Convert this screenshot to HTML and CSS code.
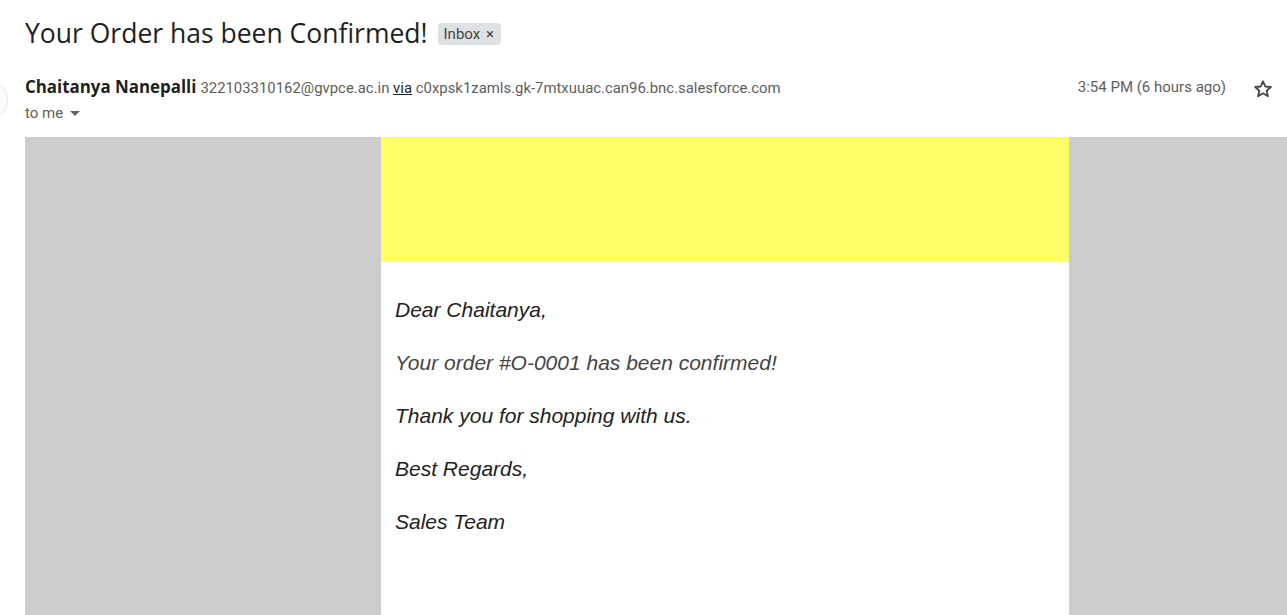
FILE: index.html
```html
<!DOCTYPE html>
<html>
<head>
<meta charset="utf-8">
<link rel="stylesheet" href="styles.css">
</head>
<body>
<div class="page">
  <div class="subject-row">
    <h1 class="subject">Your Order has been Confirmed!</h1>
    <span class="label">Inbox <span class="label-x">×</span></span>
  </div>
  <div class="header">
    <div class="avatar"></div>
    <div class="sender">
      <div class="from-line">
        <span class="from-name">Chaitanya Nanepalli</span>
        <span class="from-addr">322103310162@gvpce.ac.in <u>via</u> c0xpsk1zamls.gk-7mtxuuac.can96.bnc.salesforce.com</span>
      </div>
      <div class="to-line">to me <svg class="caret" width="10" height="5" viewBox="0 0 10 5"><path d="M0 0h10L5 5z" fill="#5f6368"/></svg></div>
    </div>
    <div class="meta">
      <span class="time">3:54 PM (6 hours ago)</span>
      <svg class="star" width="22" height="22" viewBox="0 0 24 24"><path d="M12 3.6l2.47 5.66 6.15.55-4.66 4.05 1.39 6.02L12 16.7l-5.35 3.18 1.39-6.02-4.66-4.05 6.15-.55z" fill="none" stroke="#444746" stroke-width="2" stroke-linejoin="round"/></svg>
    </div>
  </div>
  <div class="mail-bg">
    <div class="mail">
      <div class="banner"></div>
      <div class="content">
        <p>Dear Chaitanya,</p>
        <p class="soft">Your order #O-0001 has been confirmed!</p>
        <p>Thank you for shopping with us.</p>
        <p>Best Regards,</p>
        <p>Sales Team</p>
      </div>
    </div>
  </div>
</div>
</body>
</html>
```
FILE: styles.css
```css
html, body {
  margin: 0;
  padding: 0;
  background: #fff;
  overflow: hidden;
}
.page {
  width: 1287px;
  height: 615px;
  overflow: hidden;
  font-family: Roboto, "Liberation Sans", sans-serif;
  color: #1f1f1f;
}
.subject-row {
  display: flex;
  align-items: center;
  padding: 15px 0 0 25px;
  height: 36px;
}
.subject {
  margin: 0;
  font-family: "Open Sans", Roboto, sans-serif;
  font-weight: 400;
  font-size: 26.5px;
  color: #1f1f1f;
  line-height: 36px;
}
.label {
  margin-left: 10px;
  background: #dde1e3;
  color: #444746;
  font-size: 15px;
  line-height: 22px;
  padding: 0 7px 0 6px;
  border-radius: 4px;
  margin-top: 2px;
}
.label-x {
  margin-left: 2px;
}
.header {
  display: flex;
  margin-top: 26px;
  height: 60px;
  position: relative;
}
.avatar {
  position: absolute;
  left: -34px;
  top: 2px;
  width: 40px;
  height: 40px;
  border-radius: 50%;
  border: 1px solid #e8e8e8;
  background: #fbfbfb;
}
.sender {
  padding-left: 25px;
  flex: 1;
}
.from-line {
  line-height: 20px;
  white-space: nowrap;
}
.from-name {
  font-family: "Open Sans", Roboto, sans-serif;
  font-weight: 700;
  font-size: 16.9px;
  color: #1f1f1f;
}
.from-addr {
  font-size: 14.9px;
  color: #5e5e5e;
}
.from-addr u {
  color: #1f1f1f;
}
.to-line {
  margin-top: 6px;
  font-size: 15px;
  color: #5e5e5e;
  display: flex;
  align-items: center;
  gap: 7px;
}
.caret {
  margin-top: 1px;
}
.meta {
  display: flex;
  align-items: flex-start;
  padding-right: 13px;
}
.time {
  font-size: 15px;
  color: #5e5e5e;
  line-height: 20px;
}
.star {
  margin-left: 26px;
  margin-top: 1px;
}
.mail-bg {
  margin-left: 25px;
  background: #cccccc;
  height: 479px;
  display: flex;
  justify-content: flex-start;
}
.mail {
  margin-left: 356px;
  width: 688px;
  background: #fff;
}
.banner {
  height: 125px;
  background: #ffff66;
}
.content {
  padding: 36px 14px 0 14px;
  font-family: "Liberation Sans", Arial, sans-serif;
  font-style: italic;
  font-size: 21px;
  color: #222222;
}
.content p {
  margin: 0 0 29px 0;
  line-height: 24px;
}
.content .soft {
  color: #444;
}
```
